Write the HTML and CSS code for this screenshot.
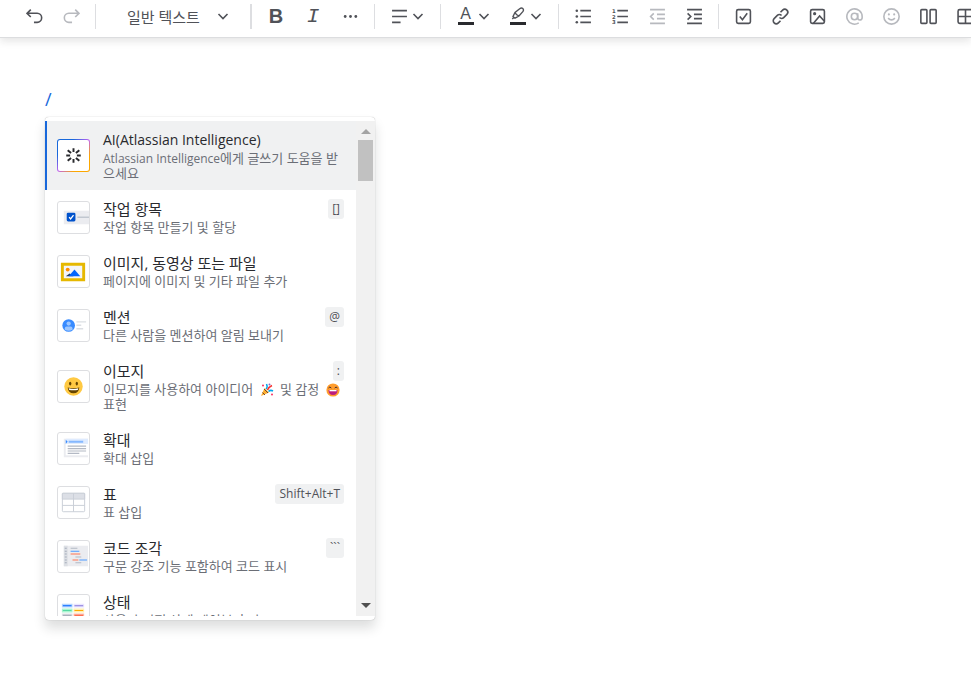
FILE: index.html
```html
<!DOCTYPE html>
<html lang="ko">
<head>
    <meta charset="UTF-8">
    <meta name="viewport" content="width=device-width, initial-scale=1.0">
    <title>편집기</title>
    <link rel="stylesheet" href="styles.css">
</head>
<body>
    <svg class="defs" aria-hidden="true">
        <symbol id="chevron" viewBox="0 0 12 12">
            <path d="M1.500 4 6 8.500 10.500 4" fill="none" stroke="currentColor" stroke-width="1.600"/>
        </symbol>
        <symbol id="smile" viewBox="0 0 20 20">
            <circle cx="10" cy="10" r="9.500" fill="#ffc943"/>
            <ellipse cx="6.600" cy="7" rx="1.200" ry="2" fill="#664500"/>
            <ellipse cx="13.400" cy="7" rx="1.200" ry="2" fill="#664500"/>
            <path d="M4 11q6 1.600 12 0q-.5 6-6 6t-6-6z" fill="#664500"/>
            <path d="M5 11.900q5 1.200 10 0l-.6 1.600q-4.400.8-8.800 0z" fill="#fff"/>
        </symbol>
    </svg>

    <header class="toolbar" role="toolbar" aria-label="서식">
        <div class="group">
            <button class="tool" aria-label="실행 취소">
                <svg class="icon" viewBox="0 0 16 16"><path d="M4.500 1.500 1 5l3.500 3.500M1 5h9.500a4.200 4.200 0 0 1 0 8.500H7.500"/></svg>
            </button>
            <button class="tool" aria-label="다시 실행" disabled>
                <svg class="icon" viewBox="0 0 16 16"><path d="M11.500 1.500 15 5l-3.500 3.500M15 5H5.500a4.200 4.200 0 0 0 0 8.500h3"/></svg>
            </button>
        </div>
        <span class="sep"></span>
        <button class="tool text-style">일반 텍스트 <svg class="chevron"><use href="#chevron"/></svg></button>
        <span class="sep sep-thick"></span>
        <div class="group">
            <button class="tool bold" aria-label="굵게">B</button>
            <button class="tool italic" aria-label="기울임꼴">I</button>
            <button class="tool" aria-label="추가 서식">
                <svg class="icon solid" viewBox="0 0 16 16"><circle cx="3" cy="8" r="1.300"/><circle cx="8" cy="8" r="1.300"/><circle cx="13" cy="8" r="1.300"/></svg>
            </button>
        </div>
        <span class="sep"></span>
        <button class="tool split" aria-label="맞춤">
            <svg class="icon" viewBox="0 0 16 16"><path d="M1 2.500h14M1 8h14M1 13.500h8"/></svg>
            <svg class="chevron"><use href="#chevron"/></svg>
        </button>
        <span class="sep"></span>
        <div class="group tight">
            <button class="tool split" aria-label="텍스트 색상">
                <span class="swatch">A</span>
                <svg class="chevron"><use href="#chevron"/></svg>
            </button>
            <button class="tool split" aria-label="강조 색상">
                <span class="swatch">
                    <svg viewBox="0 0 14 14"><path d="M2 9.500 4 5.500 8.700 1.700q1.800-1.400 3.100-.2t0 3.200L8 9l-4 2.200zM4 5.500q1.200 2.700 4 3.500M1.300 12l1.500-1.500"/></svg>
                </span>
                <svg class="chevron"><use href="#chevron"/></svg>
            </button>
        </div>
        <span class="sep"></span>
        <div class="group">
            <button class="tool" aria-label="글머리 기호 목록">
                <svg class="icon" viewBox="0 0 16 16"><path d="M5 2.500h10M5 8h10M5 13.500h10"/><g class="solid"><circle cx="1.700" cy="2.500" r="1.200"/><circle cx="1.700" cy="8" r="1.200"/><circle cx="1.700" cy="13.500" r="1.200"/></g></svg>
            </button>
            <button class="tool" aria-label="번호 매기기 목록">
                <svg class="icon" viewBox="0 0 16 16"><path d="M5 2.500h10M5 8h10M5 13.500h10"/><g class="digits"><text x="0" y="5">1</text><text x="0" y="10">2</text><text x="0" y="15">3</text></g></svg>
            </button>
            <button class="tool" aria-label="내어쓰기" disabled>
                <svg class="icon" viewBox="0 0 16 16"><path d="M1 1.500h14M7.500 6H15M7.500 10H15M1 14.500h14M4.500 5 1.500 8l3 3"/></svg>
            </button>
            <button class="tool" aria-label="들여쓰기">
                <svg class="icon" viewBox="0 0 16 16"><path d="M1 1.500h14M7.500 6H15M7.500 10H15M1 14.500h14M1.500 5l3 3-3 3"/></svg>
            </button>
        </div>
        <span class="sep"></span>
        <div class="group">
            <button class="tool" aria-label="작업 항목">
                <svg class="icon" viewBox="0 0 16 16"><rect x="1.500" y="1.500" width="13" height="13" rx="1.500"/><path d="m4.500 8 2.500 3 4.500-6"/></svg>
            </button>
            <button class="tool" aria-label="링크">
                <svg class="icon" viewBox="0 0 16 16"><path d="m8 4 2-2a2.800 2.800 0 0 1 4 4L11 9a2.800 2.800 0 0 1-4 0M8 12l-2 2a2.800 2.800 0 0 1-4-4l3-3a2.800 2.800 0 0 1 4 0"/></svg>
            </button>
            <button class="tool" aria-label="이미지">
                <svg class="icon" viewBox="0 0 16 16"><rect x="1.500" y="1.500" width="13" height="13" rx="1.500"/><path d="m4 14.500 6-7 4.500 5"/><circle class="solid" cx="5.300" cy="5.300" r="1.500"/></svg>
            </button>
            <button class="tool" aria-label="멘션" disabled>
                <svg class="icon" viewBox="0 0 16 16"><circle cx="8" cy="8" r="3"/><path d="M11 5v4.200a2.100 2.100 0 0 0 4.200 0V8A7.200 7.200 0 1 0 12 14"/></svg>
            </button>
            <button class="tool" aria-label="이모지" disabled>
                <svg class="icon" viewBox="0 0 16 16"><circle cx="8" cy="8" r="7.200"/><path d="M4.800 9.500q3.200 3.400 6.400 0"/><g class="solid"><circle cx="5.500" cy="6" r="1"/><circle cx="10.500" cy="6" r="1"/></g></svg>
            </button>
            <button class="tool" aria-label="레이아웃">
                <svg class="icon" viewBox="0 0 16 16"><rect x=".8" y="1.500" width="5.700" height="13" rx=".8"/><rect x="9.500" y="1.500" width="5.700" height="13" rx=".8"/></svg>
            </button>
            <button class="tool" aria-label="표">
                <svg class="icon" viewBox="0 0 16 16"><rect x="1" y="1.500" width="14" height="13" rx="1.500"/><path d="M8 1.500v13M1 8h14"/></svg>
            </button>
        </div>
    </header>

    <main class="editor">
        <p class="query" contenteditable="true">/</p>

        <div class="menu">
            <div class="options" role="listbox" aria-label="삽입">
                <button class="option selected" role="option" aria-selected="true">
                    <span class="thumb ai">
                        <svg viewBox="0 0 32 32" fill="none" stroke="#292a2e" stroke-width="2"><path d="M16 8.500v4M16 19.500v4M8.500 16h4M19.500 16h4M10 10.500l3.500 3M18.500 18.500l3.500 3M22 10.500l-3.500 3M13.500 18.500l-3.500 3"/></svg>
                    </span>
                    <span class="info">
                        <span class="head"><span class="title title-en">AI(Atlassian Intelligence)</span></span>
                        <span class="desc"><span class="desc-en">Atlassian Intelligence</span>에게 글쓰기 도움을 받으세요</span>
                    </span>
                </button>
                <button class="option" role="option">
                    <span class="thumb">
                        <svg viewBox="0 0 32 32"><path fill="#ebecf0" d="M6 9h26v14H6z"/><rect x="9" y="11" width="9" height="9" rx="1.500" fill="#0052cc"/><path d="m11.500 15.500 1.500 2 3-4" fill="none" stroke="#fff" stroke-width="1.300"/><path fill="#c1c7d0" d="M20 15h12v1.500H20z"/></svg>
                    </span>
                    <span class="info">
                        <span class="head"><span class="title">작업 항목</span><kbd>[]</kbd></span>
                        <span class="desc">작업 항목 만들기 및 할당</span>
                    </span>
                </button>
                <button class="option" role="option">
                    <span class="thumb">
                        <svg viewBox="0 0 32 32"><path fill="#e6b800" d="M3 7h25v19H3z"/><path fill="#f4f5f7" d="M6 10h19v13H6z"/><circle cx="10" cy="14" r="2" fill="#ff8b00"/><path fill="#253858" d="m8 21 4-3 4 3z"/><path fill="#0065ff" d="m11 21 6-7 6 7z"/></svg>
                    </span>
                    <span class="info">
                        <span class="head"><span class="title">이미지, 동영상 또는 파일</span></span>
                        <span class="desc">페이지에 이미지 및 기타 파일 추가</span>
                    </span>
                </button>
                <button class="option" role="option">
                    <span class="thumb">
                        <svg viewBox="0 0 32 32"><circle cx="11" cy="16" r="6.500" fill="#388bff"/><circle cx="11" cy="14" r="2.200" fill="#9cc6ff"/><path fill="#9cc6ff" d="M7 20.500V19q0-2 2-2h4q2 0 2 2v1.500q-4 2-8 0z"/><path fill="#dcdfe4" d="M19 11.500h10v1.500H19zM19 15h5v1.500h-5zM19 18.500h7V20h-7z"/></svg>
                    </span>
                    <span class="info">
                        <span class="head"><span class="title">멘션</span><kbd>@</kbd></span>
                        <span class="desc">다른 사람을 멘션하여 알림 보내기</span>
                    </span>
                </button>
                <button class="option" role="option">
                    <span class="thumb">
                        <svg viewBox="0 0 32 32"><use href="#smile" x="6" y="6" width="20" height="20"/></svg>
                    </span>
                    <span class="info">
                        <span class="head"><span class="title">이모지</span><kbd>:</kbd></span>
                        <span class="desc">이모지를 사용하여 아이디어
                            <svg class="emoji" viewBox="0 0 14 14"><path fill="#ffb02e" d="m1 13 3.500-8L9 9.500z"/><path stroke="#6d4534" d="m2.500 9.500 2.500 2.500M4 6l4 4"/><path fill="none" stroke="#00a6ed" stroke-width="1.500" d="M6 6q2-2 .5-5M8.500 8.500q2-2 4.500-.5"/><path fill="none" stroke="#f8312f" stroke-width="1.500" d="M7.500 7q1-3 4.500-4.500"/><g fill="#f92f60"><circle cx="3" cy="2.500" r="1"/><circle cx="12" cy="11.500" r="1"/></g><circle cx="9.500" cy="1.500" r="1" fill="#8d65c5"/></svg>
                            및 감정
                            <svg class="emoji" viewBox="0 0 14 14"><circle cx="7" cy="7" r="6.600" fill="#ff9d2e"/><path fill="none" stroke="#402a32" d="M2.500 5q1.300-2 2.800 0M8.700 5q1.300-2 2.800 0"/><path fill="#bb1d80" d="M2.500 7h9q0 5-4.500 5T2.500 7z"/><path fill="#fff" d="M3.500 7h7v1.300h-7z"/></svg>
                            표현</span>
                    </span>
                </button>
                <button class="option" role="option">
                    <span class="thumb">
                        <svg viewBox="0 0 32 32"><path fill="#ebecf0" d="M6 6h25v19H6z"/><path fill="#fff" d="M8 11h23v12H8z"/><path fill="#deebff" d="M8 6h23v5H8z"/><path fill="#388bff" d="M8 7l2 2-2 2z"/><path fill="#85b8ff" d="M11 8h15v2H11z"/><path fill="#b3b9c4" d="M10 13h19v1.200H10zM10 15.500h19v1.200H10zM10 18h19v1.200H10zM10 20.500h12v1.200H10z"/></svg>
                    </span>
                    <span class="info">
                        <span class="head"><span class="title">확대</span></span>
                        <span class="desc">확대 삽입</span>
                    </span>
                </button>
                <button class="option" role="option">
                    <span class="thumb">
                        <svg viewBox="0 0 32 32" stroke="#c9ced7"><rect x="4.500" y="6.500" width="23" height="19" rx="1" fill="#fff"/><path fill="#dcdfe6" d="M4.500 6.500h23v6h-23z"/><path fill="none" d="M4.500 19h23M16 6.500v19"/></svg>
                    </span>
                    <span class="info">
                        <span class="head"><span class="title">표</span><kbd>Shift+Alt+T</kbd></span>
                        <span class="desc">표 삽입</span>
                    </span>
                </button>
                <button class="option" role="option">
                    <span class="thumb">
                        <svg viewBox="0 0 32 32"><path fill="#ebecf0" d="M6 5h25v21H6z"/><path fill="#dcdfe4" d="M6 5h4v21H6z"/><path fill="#a5adba" d="M7 7h2v1H7zM7 10h2v1H7zM7 13h2v1H7zM7 16h2v1H7zM7 19h2v1H7zM7 22h2v1H7z"/><path fill="#b3b9c4" d="M13 7h7v1h-7zM18 16h6v1h-6zM18 22h6v1h-6z"/><path fill="#4c9aff" d="M13 10h9v1h-9zM22 19h8v1h-8z"/><path fill="#ff7452" d="M13 13h10v1H13zM15 19h6v1h-6z"/></svg>
                    </span>
                    <span class="info">
                        <span class="head"><span class="title">코드 조각</span><kbd>```</kbd></span>
                        <span class="desc">구문 강조 기능 포함하여 코드 표시</span>
                    </span>
                </button>
                <button class="option" role="option">
                    <span class="thumb">
                        <svg viewBox="0 0 32 32"><path fill="#b3d4ff" d="M4 9h11v4H4z"/><path fill="#0065ff" d="M5 10.500h9v1H5z"/><path fill="#eae6ff" d="M16 9h11v4H16z"/><path fill="#8777d9" d="M17 10.500h9v1h-9z"/><path fill="#abf5d1" d="M4 14h11v4H4z"/><path fill="#57d9a3" d="M5 15.500h9v1H5z"/><path fill="#fff0b3" d="M16 14h11v4H16z"/><path fill="#ffab00" d="M17 15.500h9v1h-9z"/><path fill="#dfe1e6" d="M4 19h11v4H4z"/><path fill="#97a0af" d="M5 20.500h9v1H5z"/><path fill="#ffbdad" d="M16 19h11v4H16z"/><path fill="#ff5630" d="M17 20.500h9v1h-9z"/></svg>
                    </span>
                    <span class="info">
                        <span class="head"><span class="title">상태</span></span>
                        <span class="desc">사용자 지정 상태 레이블 추가</span>
                    </span>
                </button>
            </div>
            <div class="scrollbar" aria-hidden="true">
                <span class="arrow up"></span>
                <span class="handle"></span>
                <span class="arrow down"></span>
            </div>
        </div>
    </main>
</body>
</html>
```

FILE: styles.css
```css
* {
    box-sizing: border-box;
}

body {
    margin: 0;
    min-height: 100vh;
    overflow-x: hidden;
    background: #fff;
    color: #292a2e;
    font-family: "Open Sans", "Noto Sans CJK KR", sans-serif;
}

button {
    border: none;
    background: none;
    color: inherit;
    font: inherit;
    cursor: pointer;
}

.defs {
    display: none;
}

/* toolbar */
.toolbar {
    display: flex;
    align-items: center;
    height: 38px;
    padding: 0 0 5px 18px;
    border-bottom: 1px solid #dcdddf;
    box-shadow: 0 3px 8px rgba(30, 31, 33, 0.12);
}

.group {
    display: flex;
    flex: none;
    gap: 5px;
}

.group.tight {
    gap: 3px;
}

.tool {
    display: flex;
    flex: none;
    align-items: center;
    justify-content: center;
    width: 32px;
    height: 32px;
    padding: 0;
    color: #505258;
}

.tool:disabled {
    color: #b7b9be;
    cursor: default;
}

.icon {
    width: 17px;
    height: 17px;
    fill: none;
    stroke: currentColor;
    stroke-width: 1.5;
}

.solid {
    fill: currentColor;
    stroke: none;
}

.digits {
    fill: currentColor;
    stroke: none;
    font: bold 5px "DejaVu Sans", sans-serif;
}

.chevron {
    width: 12px;
    height: 12px;
}

.sep {
    flex: none;
    width: 1px;
    height: 25px;
    margin: 0 8px;
    background: #dddee1;
}

.sep-thick {
    width: 2px;
}

.text-style {
    justify-content: space-between;
    width: 138px;
    padding: 0 13px 0 23px;
    font-size: 15px;
}

.bold {
    font: bold 20px "Liberation Sans", sans-serif;
}

.italic {
    font: italic 21px "Liberation Mono", monospace;
}

.split {
    gap: 4px;
    width: 49px;
}

.swatch {
    display: flex;
    flex-direction: column;
    align-items: center;
    width: 16px;
    height: 18px;
    border-bottom: 3px solid #292a2e;
    font: 16px/14px "Liberation Sans", sans-serif;
}

.swatch svg {
    width: 14px;
    height: 14px;
    fill: none;
    stroke: currentColor;
    stroke-width: 1.4;
}

/* editor */
.editor {
    padding: 49px 45px 78px;
}

.query {
    margin: 0 0 6px;
    color: #1868db;
    font-size: 18px;
    line-height: 24px;
    outline: none;
}

.menu {
    display: flex;
    width: 330px;
    max-width: 100%;
    max-height: 503px;
    padding: 4px 0;
    border-radius: 4px;
    background: #fff;
    box-shadow: 0 0 1px rgba(30, 31, 33, 0.4), 0 8px 12px rgba(30, 31, 33, 0.15);
}

.options {
    flex: 1;
    min-width: 0;
    overflow: hidden;
}

.option {
    display: flex;
    align-items: center;
    gap: 13px;
    width: 100%;
    padding: 9px 12px;
    text-align: left;
}

.option.selected {
    background: #f0f1f2;
    box-shadow: inset 2px 0 #1868db;
}

.thumb {
    flex: none;
    width: 33px;
    height: 33px;
    overflow: hidden;
    border: 1px solid #dddee1;
    border-radius: 3px;
    background: #fff;
}

.thumb svg {
    display: block;
    width: 100%;
}

.thumb.ai {
    padding: 1px;
    border: none;
    background: linear-gradient(135deg, #1868db 25%, #bf63f3 50%, #fca700 75%);
}

.thumb.ai svg {
    border-radius: 2px;
    background: #fff;
}

.info {
    flex: 1;
    min-width: 0;
}

.head {
    display: flex;
    align-items: flex-start;
    justify-content: space-between;
    height: 21px;
}

.title {
    font-size: 15px;
    line-height: 20px;
}

.title-en {
    font-size: 14px;
}

.desc {
    display: block;
    color: #6b6e76;
    font-size: 13px;
    line-height: 15px;
    word-break: break-all;
}

.desc-en {
    font-size: 12px;
}

.emoji {
    width: 14px;
    height: 14px;
    margin: 0 3px;
    vertical-align: -3px;
}

kbd {
    padding: 0 4px;
    border-radius: 3px;
    background: #f0f1f2;
    color: #505258;
    font: 12px/20px "Open Sans", sans-serif;
}

.scrollbar {
    display: flex;
    flex: none;
    flex-direction: column;
    align-items: center;
    width: 19px;
    padding: 8px 2px;
    background: #f1f1f1;
}

.handle {
    width: 15px;
    height: 41px;
    margin: 6px 0 auto;
    background: #c1c1c1;
}

.arrow {
    border: 5px solid transparent;
}

.arrow.up {
    border-top: none;
    border-bottom-color: #a3a3a3;
}

.arrow.down {
    border-bottom: none;
    border-top-color: #505050;
}
```
